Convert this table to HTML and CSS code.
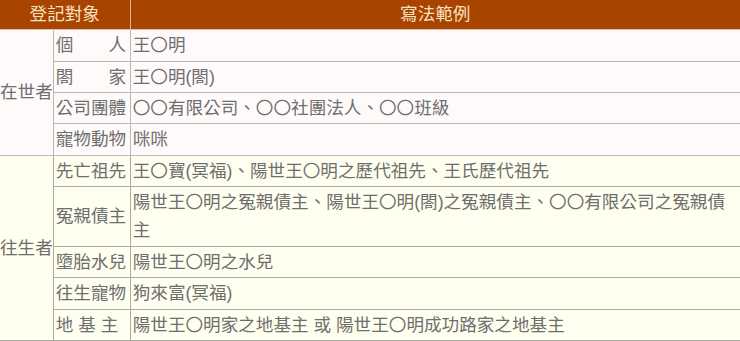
FILE: index.html
```html
<!DOCTYPE html>
<html lang="zh-Hant">
<head>
<meta charset="utf-8">
<title>登記對象</title>
<link rel="stylesheet" href="styles.css">
</head>
<body>
<table class="reg">
  <colgroup>
    <col class="c1">
    <col class="c2">
    <col class="c3">
  </colgroup>
  <thead>
    <tr>
      <th colspan="2" class="h-left">登記對象</th>
      <th class="h-right">寫法範例</th>
    </tr>
  </thead>
  <tbody class="alive">
    <tr>
      <td rowspan="4" class="group">在世者</td>
      <td class="kind">個　　人</td>
      <td class="ex">王〇明</td>
    </tr>
    <tr>
      <td class="kind">閤　　家</td>
      <td class="ex">王〇明(閤)</td>
    </tr>
    <tr>
      <td class="kind">公司團體</td>
      <td class="ex">〇〇有限公司、〇〇社團法人、〇〇班級</td>
    </tr>
    <tr>
      <td class="kind">寵物動物</td>
      <td class="ex">咪咪</td>
    </tr>
  </tbody>
  <tbody class="dead">
    <tr>
      <td rowspan="5" class="group">往生者</td>
      <td class="kind">先亡祖先</td>
      <td class="ex">王〇寶(冥福)、陽世王〇明之歷代祖先、王氏歷代祖先</td>
    </tr>
    <tr>
      <td class="kind">冤親債主</td>
      <td class="ex">陽世王〇明之冤親債主、陽世王〇明(閤)之冤親債主、〇〇有限公司之冤親債主</td>
    </tr>
    <tr>
      <td class="kind">墮胎水兒</td>
      <td class="ex">陽世王〇明之水兒</td>
    </tr>
    <tr>
      <td class="kind">往生寵物</td>
      <td class="ex">狗來富(冥福)</td>
    </tr>
    <tr>
      <td class="kind">地 基 主</td>
      <td class="ex">陽世王〇明家之地基主 或 陽世王〇明成功路家之地基主</td>
    </tr>
  </tbody>
</table>
</body>
</html>
```

FILE: styles.css
```css
html, body {
  margin: 0;
  padding: 0;
  background: #ffffff;
}

.reg {
  width: 740px;
  table-layout: fixed;
  border-collapse: collapse;
  font-family: "Liberation Sans", "Noto Sans CJK TC", sans-serif;
  font-size: 17.6px;
  line-height: 28.2px;
  color: #6e6e6e;
}

.c1 { width: 53px; }
.c2 { width: 77px; }

.reg th {
  background: #a84300;
  color: #f7e1bf;
  font-weight: normal;
  text-align: center;
  padding: 0 0 1px 0;
  height: 28px;
  border-bottom: 1px solid #dcc09e;
}

.reg th.h-left {
  border-right: 1px solid #d9b89a;
}

.reg td {
  padding: 1.1px 2.2px;
  border: 1px solid #b8b8b8;
  vertical-align: middle;
  text-align: left;
  white-space: normal;
}

.reg td.group {
  padding: 0;
  text-align: center;
  white-space: nowrap;
  border-left: none;
}

.reg td.kind {
  white-space: nowrap;
}

.reg td.ex {
  border-right: none;
  vertical-align: top;
}

.alive td {
  background: #fffafa;
}

.dead td {
  background: #fffff0;
  border-color: #ababa3;
}
```
